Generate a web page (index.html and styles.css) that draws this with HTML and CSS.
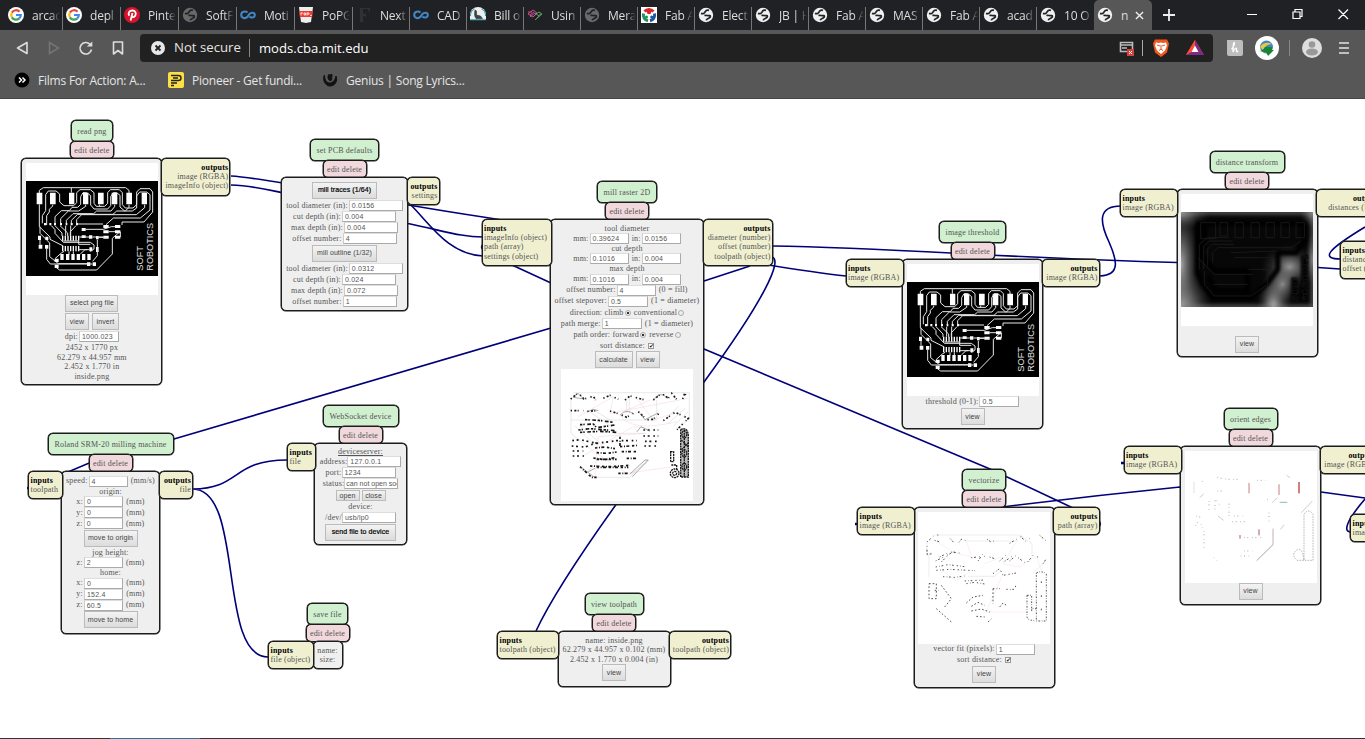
FILE: index.html
```html
<!DOCTYPE html>
<html lang="en">
<head>
<meta charset="utf-8">
<title>mods</title>
<link rel="stylesheet" href="styles.css">
</head>
<body>
<svg class="defs" width="0" height="0" aria-hidden="true">
  <defs>
    <symbol id="globe" viewBox="0 0 16 16"><circle cx="8" cy="8" r="7.2" fill="currentColor"/><path d="M3 6.4c2 .8 3.6-.1 4.2-1.7.7-1.2 2.3-1.8 3.8-1.3M6.4 8.500c2.100-.7 3.100.5 5 .1 1.300-.2 1.200 1.400.3 2.100-1.300 1-3 .8-3.500 2.700" fill="none" stroke="#202124" stroke-width="1.700"/></symbol>
    <symbol id="google" viewBox="0 0 16 16"><circle cx="8" cy="8" r="8" fill="#fff"/><g fill="none" stroke-width="2.200"><path d="M3.900 5.600A4.800 4.800 0 0 1 11.500 4.700" stroke="#ea4335"/><path d="M3.900 10.400a4.800 4.800 0 0 1 0-4.800" stroke="#fbbc05"/><path d="M11.300 11.400a4.800 4.800 0 0 1-7.400-1" stroke="#34a853"/><path d="M8 8h4.800a4.800 4.800 0 0 1-1.500 3.400" stroke="#4285f4"/></g></symbol>
    <symbol id="infinity" viewBox="0 0 16 16"><path d="M7.500 5.500C5.500 3.600 1.200 4.500 1.200 7.800c0 3.500 4.200 4.200 6.300 2l1.800-2.600C11 5 14.800 5.200 14.800 8c0 2.800-3.800 3.200-5.300 1.500" fill="none" stroke="#4186c4" stroke-width="2.100"/></symbol>
    <symbol id="pcb" viewBox="78 213 396 285">
      <rect x="78" y="213" width="396" height="285" fill="#000"/>
      <g fill="#fff"><path d="M110 248h17v35h-17zM150 248h17v35h-17zM207 248h16v35h-16zM249 248h16v35h-16zM294 248h17v35h-17zM335 248h17v35h-17zM379 248h17v35h-17zM425 248h16v35h-16z"/>
      <path d="M310 345h16v9h-16zM310 361h16v9h-16zM310 377h16v9h-16zM345 345h16v9h-16zM345 361h16v9h-16zM345 377h16v9h-16zM245 354h12v9h-12zM245 376h12v8h-12zM267 376h10v10h-10zM288 378h8v10h-8zM114 377h9v13h-9zM136 380h9v10h-9zM116 404h11v12h-11zM135 405h10v11h-10zM268 412h9v12h-9zM288 411h8v15h-8zM181 432h10v18h-10zM198 432h10v18h-10zM214 432h10v18h-10zM230 432h10v18h-10zM246 432h10v18h-10zM262 432h10v18h-10zM164 446h12v10h-12zM164 464h12v10h-12zM261 457h10v11h-10zM278 457h10v11h-10z"/>
      <path d="M186 377h4v15h-4zM194 377h4v15h-4zM202 377h4v15h-4zM210 377h4v15h-4zM218 377h4v15h-4zM226 377h4v15h-4zM234 377h4v15h-4zM186 408h4v16h-4zM194 408h4v16h-4zM202 408h4v16h-4zM210 408h4v16h-4zM218 408h4v16h-4zM226 408h4v16h-4zM234 408h4v16h-4z"/>
      <path d="M132 339h7v7h-7zM148 339h6v7h-6zM162 339h6v7h-6zM180 339h6v7h-6zM197 339h5v7h-5zM212 339h6v7h-6zM228 339h6v7h-6z"/></g>
      <g fill="none" stroke="#e8e8e8" stroke-width="3" stroke-linejoin="round">
        <path d="M118 250V241L130 233H377L387 241V250M118 283V350L150 381V388L190 408M214 234V248"/>
        <path d="M127 340V317L137 302V254L145 243H168L179 252V276L192 287H221L230 278V248L240 239H271L282 248V280L289 289H314L323 280V248L331 239H358L367 248V284L376 294H399L410 284V246L420 236H450L458 246V306L432 336H366V345"/>
        <path d="M158 284V288L148 298V306L140 317V345M165 341V320L184 302H208L216 292H233L242 283V260L249 248H260L272 257V285L282 297H323L332 287V260L340 248H350L360 256V291L374 303H397L410 294V258L419 246H440L450 254V300L421 324H340L318 344"/>
        <path d="M257 284V289L236 303H205L182 326V341M299 284V290M344 284V290L333 303H290L281 311H219L199 331V341M387 284V292L376 303H350L339 313H233L214 331V341M434 284V293L409 314H245L230 329V341"/>
        <path d="M197 347V377M212 347V377M165 347L186 369V378M180 347L203 369V378M228 347L211 365V378M230 342H309M154 347L165 359V370L190 397H271L282 405V417L271 424M257 358H310L334 350H345M238 381H268M277 381H310M326 365H345M361 365V381"/>
        <path d="M120 350V370L149 399V440L175 461H261M120 389V404M140 415V448L151 462H277M165 446L184 429L192 424M169 473L179 480H290L337 432V385L360 365M190 393H236V403H271M292 389V437L278 454M234 419H262M207 424V434M220 424V434M241 432L255 419H268M296 382H325"/>
      </g>
      <g fill="#e0e0e0" font-family="Liberation Sans" font-size="26"><text transform="translate(428 482) rotate(-90)" textLength="74" lengthAdjust="spacingAndGlyphs">SOFT</text><text transform="translate(458 482) rotate(-90)" textLength="143" lengthAdjust="spacingAndGlyphs">ROBOTICS</text></g>
    </symbol>
    <radialGradient id="glow"><stop offset="0" stop-color="#d0d0d0"/><stop offset=".4" stop-color="#888" stop-opacity=".7"/><stop offset="1" stop-color="#333" stop-opacity="0"/></radialGradient>
    <filter id="soft"><feGaussianBlur stdDeviation="7"/></filter>
    <filter id="haze"><feGaussianBlur stdDeviation="4"/></filter>
  </defs>
</svg>

<header class="browser">
  <div class="tabs">
    <div class="tab"><svg><use href="#google"/></svg><span>arcac</span></div>
    <div class="tab"><svg><use href="#google"/></svg><span>depl</span></div>
    <div class="tab"><svg viewBox="0 0 16 16"><circle cx="8" cy="8" r="8" fill="#d8132c"/><path d="M6.600 13.500L8.500 6M5.300 8.800C3.500 5.500 5.700 3.500 8.300 3.500c3.400 0 4.200 3 2.900 5.300-1 1.700-3 1.600-3.500.3" fill="none" stroke="#fff" stroke-width="1.800"/></svg><span>Pinte</span></div>
    <div class="tab dim"><svg><use href="#globe"/></svg><span>SoftF</span></div>
    <div class="tab"><svg><use href="#infinity"/></svg><span>Moti</span></div>
    <div class="tab"><svg viewBox="0 0 16 16"><path d="M1 0h14l-2 15-5 1-5-1z" fill="#eee"/><path d="M1 4h14l-.8 6H1.800z" fill="#ed3b2f"/><path d="M3 5.500v3M3 6h2M6 6v2h1.500V6zM9 5.500v3M9 6h2v1.200H9M12 8.300h2" fill="none" stroke="#fff" stroke-width=".8"/></svg><span>PoPG</span></div>
    <div class="tab small"><svg viewBox="0 0 16 16"><path d="M3 1h11v4h-1l-1-3H7v5h2l1-2v6L9 9H7v5l2 1H3l1-1V2z" fill="#303135"/></svg><span>Next</span></div>
    <div class="tab small"><svg><use href="#infinity"/></svg><span>CAD</span></div>
    <div class="tab small"><svg viewBox="0 0 16 16"><path d="M0 13V8a8 8 0 0 1 16 0v5z" fill="#eee"/><path d="M5 3l1.500 1v4l4 1 2 2.500H6C4 9 4.500 6 5 3zM7 11v2M10 11v2" fill="#444" stroke="#333" stroke-width=".6"/><path d="M0 12.800h16M.5 9a7.500 7.500 0 0 1 4-7M15.500 9a7.500 7.500 0 0 0-4-7" fill="none" stroke="#16a0b0"/></svg><span>Bill o</span></div>
    <div class="tab small"><svg viewBox="0 0 16 16"><g fill="none" stroke-width="1"><path d="M1 7l5-4 4 3-4 4zM3 8l4-3M1 5h4" stroke="#d04c7e"/><path d="M3 10l5-4 4 3-3 3" stroke="#9361bd"/><path d="M8 13l7-6-3-2-4 3M11 9l3-2" stroke="#58a64e"/></g></svg><span>Usin</span></div>
    <div class="tab small dim"><svg><use href="#globe"/></svg><span>Mera</span></div>
    <div class="tab small"><svg viewBox="0 0 16 16"><path d="M0 0h16v16H0z" fill="#fff"/><g fill="none" stroke-width="3"><path d="M3.500 4.500a6 6 0 0 1 9 0" stroke="#d7262e"/><path d="M2.500 6.500a6 6 0 0 0 4.500 7.300" stroke="#22935a"/><path d="M13.500 6.500a6 6 0 0 1-4.500 7.300" stroke="#20579e"/></g><circle cx="8" cy="5" r="2.200" fill="#d7262e"/><circle cx="5.500" cy="10" r="1.500" fill="#22935a"/><circle cx="10.700" cy="10" r="1.500" fill="#20579e"/></svg><span>Fab A</span></div>
    <div class="tab small"><svg><use href="#globe"/></svg><span>Elect</span></div>
    <div class="tab small"><svg><use href="#globe"/></svg><span>JB | H</span></div>
    <div class="tab small"><svg><use href="#globe"/></svg><span>Fab A</span></div>
    <div class="tab small"><svg><use href="#globe"/></svg><span>MAS</span></div>
    <div class="tab small"><svg><use href="#globe"/></svg><span>Fab A</span></div>
    <div class="tab small"><svg><use href="#globe"/></svg><span>acad</span></div>
    <div class="tab small last"><svg><use href="#globe"/></svg><span>10 O</span></div>
    <div class="tab active"><svg><use href="#globe"/></svg><span>n</span><svg class="close" viewBox="0 0 10 10"><path d="M1 1l8 8M9 1L1 9" stroke="#eee" stroke-width="1.500"/></svg></div>
    <svg class="plus" viewBox="0 0 12 12"><path d="M6 0v12M0 6h12" stroke="#eee" stroke-width="1.800"/></svg>
    <svg class="window-buttons" viewBox="0 0 103 10"><path d="M0 5.500h10M46 3h7v6.500h-7zM48 3V.5h7v7h-2M91.500 .5l9.500 9.500M101 .5L91.500 10" fill="none" stroke="#fff" stroke-width="1.200"/></svg>
  </div>
  <div class="toolbar">
    <svg class="nav" viewBox="0 0 112 16"><g fill="none" stroke="#ddd" stroke-width="1.600"><path d="M12 2.500v11L2.500 8z" stroke-linejoin="round"/><path d="M34.500 2.500v11L43.500 8z" stroke="#747474"/><path d="M75 4.200A5.800 5.800 0 1 0 76.500 9.500"/><path d="M98.500 2h9v12L103 10.500 98.500 14z" stroke-linejoin="round"/></g><path d="M71.800 6.500h5.500v-5z" fill="#ddd"/></svg>
    <div class="address">
      <svg class="warn" viewBox="0 0 14 14"><circle cx="7" cy="7" r="7" fill="#e8e8e8"/><path d="M4.500 4.500l5 5M9.500 4.500l-5 5" stroke="#222" stroke-width="1.800"/></svg>
      <span class="insecure">Not secure</span><span class="url">mods.cba.mit.edu</span>
      <svg class="shield-icons" viewBox="0 0 88 20"><path d="M3.500 4.500h12v9h-12zM4 7h11M5 10h5" fill="none" stroke="#bbb" stroke-width="1.600"/><path d="M10 11h7v7h-7z" fill="#d3423b"/><path d="M12 13l3 3M15 13l-3 3" stroke="#fff"/><path d="M25.500 2v16" stroke="#aaa"/><path d="M38 1.500h12l2 4-2 9-6 4.500-6-4.500-2-9z" fill="#f4571c"/><path d="M39 4.500l3 .5 2-.5 2 .5 3-.5 1 3-2 5-4 3.500-4-3.500-2-5z" fill="#fff"/><path d="M40 7l3 1M48 7l-3 1M44 7v4M42 12.500l2-1.500 2 1.500" stroke="#e55326" stroke-width="1" fill="none"/><path d="M78 2L69 17h18z" fill="#f2473b"/><path d="M78 2l9 15H69l9-5z" fill="#7b2c84"/><path d="M78 2v6l-4 6-5 3z" fill="#ff4b36"/><path d="M78 7.500l3.500 6.500h-7z" fill="#fff"/></svg>
    </div>
    <svg class="extensions" viewBox="0 0 130 26"><path d="M3 5h14q2 0 2 2v12q0 2-2 2H5q-2 0-2-2z" fill="#bdbdbd"/><path d="M7.500 14c3-3 3.500-6.500 2.500-6.500s-1 4-1 9.500c1-3 3.500-5 3.500-3v2q0 1.500 1.500 0" fill="none" stroke="#fff" stroke-width="1.300"/><circle cx="43" cy="13" r="12" fill="#fff"/><circle cx="42.500" cy="12" r="6.500" fill="#3d86cd"/><path d="M36 12c3-5 8-5 12-3-4 0-7 2-9 6z" fill="#e8c742"/><path d="M41 12h7v3h2l-6 6-2-4-7-1q4 0 6-4z" fill="#19852f"/><path d="M65.500 5v16" stroke="#888"/><circle cx="88" cy="13" r="10" fill="#dedede"/><circle cx="88" cy="9.500" r="3.300" fill="#999"/><ellipse cx="88" cy="17" rx="6" ry="3.500" fill="#999"/><path d="M115 8h10M115 13h10M115 18h10" stroke="#e4e4e4" stroke-width="1.500"/></svg>
  </div>
  <div class="bookmarks">
    <svg viewBox="0 0 16 16"><circle cx="8" cy="8" r="7.500" fill="#000"/><path d="M5 5.500L7.500 8 5 10.500M8.500 5.500L11 8l-2.500 2.500" fill="none" stroke="#fff" stroke-width="1.500"/></svg><span class="films">Films For Action: A...</span>
    <svg viewBox="0 0 16 16"><rect width="16" height="16" rx="2" fill="#fbdf45"/><path d="M3 3.500h7.500q2.500 0 2.500 2.500t-2.500 2.500H3M5 6h5M3 11h6M3 13.500h3" fill="none" stroke="#222" stroke-width="1.400"/></svg><span class="pioneer">Pioneer - Get fundi...</span>
    <svg viewBox="0 0 16 16"><path d="M2.500 3C0 7 3 14 8 14c5 0 8-5 6-10-1 5-4 7.500-7 7S2.500 7 2.500 3zM6.500 2.500C5.500 5 6 8 8 8.500c2 0 2-1 1.700-2.500L10 2" fill="#111" stroke="#111"/></svg><span class="genius">Genius | Song Lyrics...</span>
  </div>
</header>

<main class="canvas">
  <svg class="wires" viewBox="0 99 1365 640"><g fill="none" stroke="#00007a" stroke-width="1.600">
    <path d="M231 176C270 178 350 197 483 217S760 267 846 276"/>
    <path d="M231 185C265 186 310 200 408 223.500C448 232 462 237 483 237"/>
    <path d="M410 204C431 225 448 254 483 256"/>
    <path d="M484 244q-5 3 0 6M512 265L551 283L704 349L990 469L1073 508M1099 521q3 4-1 6"/>
    <path d="M772 246C900 248 1000 258 1177 262.500L1318 267.500L1340 269"/>
    <path d="M772 257C783 260 764 300 704 382L615 506Q555 590 536 631"/>
    <path d="M750 266L704 281L551 328L174 439L88 463.500L68 472"/>
    <path d="M193 489C240 489 232 460 287 460M193 489C245 490 217 657 268 657"/>
    <path d="M1100 276C1122 275 1116 258 1109 242C1100 223 1097 206 1121 206"/>
    <path d="M1365 227C1327 250 1320 259 1341 259M1002 507Q1090 496 1180 487L1321 492L1365 498M1365 499C1347 520 1343 531 1350 532"/>
    <path d="M27 488h3M855 524h3M1121 463h3" stroke-width="2.500"/>
  </g></svg>

  <section class="module read-png">
    <h2>read png</h2><div class="actions">edit delete</div>
    <div class="body">
      <div class="preview"><svg><use href="#pcb"/></svg></div>
      <div class="buttons"><button class="w53">select png file</button></div>
      <div class="buttons"><button class="w24">view</button><button class="w27">invert</button></div>
      <div class="row">dpi: <b class="field w40">1000.023</b></div>
      <p>2452 x 1770 px</p><p>62.279 x 44.957 mm</p><p>2.452 x 1.770 in</p><p>inside.png</p>
    </div>
    <div class="port out"><strong>outputs</strong><span>image (RGBA)</span><span>imageInfo (object)</span></div>
  </section>

  <section class="module pcb-defaults">
    <h2>set PCB defaults</h2><div class="actions">edit delete</div>
    <div class="body">
      <div class="buttons"><button class="w65 strong">mill traces (1/64)</button></div>
      <div class="row">tool diameter (in): <b class="field w54">0.0156</b></div>
      <div class="row">cut depth (in): <b class="field w54">0.004</b></div>
      <div class="row">max depth (in): <b class="field w54">0.004</b></div>
      <div class="row">offset number: <b class="field w54">4</b></div>
      <div class="buttons second"><button class="w65">mill outline (1/32)</button></div>
      <div class="row">tool diameter (in): <b class="field w54">0.0312</b></div>
      <div class="row">cut depth (in): <b class="field w54">0.024</b></div>
      <div class="row">max depth (in): <b class="field w54">0.072</b></div>
      <div class="row">offset number: <b class="field w54">1</b></div>
    </div>
    <div class="port out"><strong>outputs</strong><span>settings</span></div>
  </section>

  <section class="module mill-raster">
    <h2>mill raster 2D</h2><div class="actions">edit delete</div>
    <div class="body">
      <p>tool diameter</p><div class="row">mm: <b class="field w39">0.39624</b> &nbsp;in: <b class="field w39">0.0156</b></div>
      <p>cut depth</p><div class="row">mm: <b class="field w39">0.1016</b> &nbsp;in: <b class="field w39">0.004</b></div>
      <p>max depth</p><div class="row">mm: <b class="field w39">0.1016</b> &nbsp;in: <b class="field w39">0.004</b></div>
      <div class="row">offset number: <b class="field w39">4</b> &nbsp;(0 = fill)</div>
      <div class="row">offset stepover: <b class="field w40">0.5</b> &nbsp;(1 = diameter)</div>
      <div class="row choice">direction: climb <i class="radio on"></i> &nbsp;conventional <i class="radio"></i></div>
      <div class="row">path merge: <b class="field w40">1</b> &nbsp;(1 = diameter)</div>
      <div class="row choice">path order: forward <i class="radio on"></i> &nbsp;reverse <i class="radio"></i></div>
      <div class="row sort">sort distance: <i class="check">✔</i></div>
      <div class="buttons"><button class="w37">calculate</button><button class="w24">view</button></div>
      <div class="preview"><svg viewBox="93 57 396 396">
        <g fill="none" stroke="#dedede" stroke-width="2"><path d="M130 128H478V205L440 240M123 148V250L185 300M123 210H380M135 228L200 290M147 225L215 283M178 185L245 230M190 180L250 215M290 145V190M298 142V190M380 150V205M410 205L445 170M415 220L465 175M430 228L475 185M260 250H345M190 382H300L350 330M303 372L350 338M165 370L195 345"/></g>
        <g fill="none" stroke="#f5c4c9" stroke-width="1.200"><path d="M145 200L250 140L240 190L475 145M265 190Q300 250 440 215M155 320L310 230L360 235M185 300L290 370L430 350M195 380L205 260L350 250M320 145L370 210L430 190M280 185L360 150"/></g>
        <g fill="none" stroke="#171717" stroke-width="5" stroke-dasharray="4 7 6 4 3 13"><path d="M122 147L145 129L162 147L190 139L197 150M220 145L240 136L265 148M285 150L300 138L345 150M370 150L395 130L415 145L425 130L440 148M458 147L464 130L475 145"/><path d="M122 182H160M172 184L200 182M240 183L270 193L290 202L310 190M325 185L350 209L370 208L390 186M400 212L435 187L475 205L440 240" /><path d="M165 209L205 211L250 217M150 224L190 222L200 233L254 225M145 240L180 236L258 242M150 247L210 244L260 247" stroke-dasharray="7 3 4 8 11 5"/><path d="M127 272L150 269L200 280L260 272H320M125 288L165 291L200 278M128 303H160M128 318H162M340 240H385M340 258H385M345 274H385M343 288H385" stroke-dasharray="5 8 6 11"/><path d="M195 294L225 291L255 296M200 308L232 310L260 306M190 324L225 329L260 322M200 328H260M180 348L240 350L300 346M200 352H295M270 260V290M270 290L325 286M275 305H320M290 325H318M265 370H300M150 350L185 382H200" stroke-dasharray="7 5 3 4 9 8"/></g>
        <path d="M452 238Q475 230 475 260V381H452Z" fill="#bbb"/>
        <g fill="none" stroke="#191919" stroke-width="4" stroke-dasharray="6 2"><path d="M452 238Q475 230 475 260V381H452Z"/><ellipse cx="463" cy="253" rx="7" ry="11"/><ellipse cx="463" cy="310" rx="7" ry="11"/><ellipse cx="463" cy="350" rx="7" ry="10"/><path d="M454 270L475 290M454 299L475 280M463 240V380M422 305h9v30h-9z"/><circle cx="434" cy="370" r="13"/><circle cx="434" cy="370" r="6"/><path d="M424 345h16v14"/></g>
        <g fill="none" stroke="#555" stroke-width="1.500"><path d="M130 142l13-13 18 18zM172 186l17-8 16 4M270 195q20-20 40-3M330 190l15 19 35-18M370 150q20-30 43-5M307 380l48-50-10 0-46 43M150 349l45 34M175 365l20-10M320 246l13-16 27 14"/></g>
      </svg></div>
    </div>
    <div class="port in"><strong>inputs</strong><span>imageInfo (object)</span><span>path (array)</span><span>settings (object)</span></div>
    <div class="port out"><strong>outputs</strong><span>diameter (number)</span><span>offset (number)</span><span>toolpath (object)</span></div>
  </section>

  <section class="module threshold">
    <h2>image threshold</h2><div class="actions">edit delete</div>
    <div class="body"><div class="preview"><svg><use href="#pcb"/></svg></div><div class="row">threshold (0-1): <b class="field w40">0.5</b></div><div class="buttons"><button class="w24">view</button></div></div>
    <div class="port in"><strong>inputs</strong><span>image (RGBA)</span></div><div class="port out"><strong>outputs</strong><span>image (RGBA)</span></div>
  </section>

  <section class="module distance">
    <h2>distance transform</h2><div class="actions">edit delete</div>
    <div class="body"><div class="preview"><svg viewBox="230 213 396 285"><path d="M230 213h396v285H230z" fill="#070707"/>
      <g fill="url(#glow)"><ellipse cx="230" cy="498" rx="95" ry="120"/><ellipse cx="230" cy="370" rx="60" ry="190" opacity=".8"/><ellipse cx="508" cy="505" rx="52" ry="120"/><ellipse cx="555" cy="378" rx="85" ry="68" opacity=".75"/><ellipse cx="535" cy="430" rx="60" ry="70" opacity=".6"/><ellipse cx="230" cy="213" rx="90" ry="55" opacity=".8"/><ellipse cx="626" cy="213" rx="40" ry="50" opacity=".8"/><ellipse cx="626" cy="355" rx="25" ry="80" opacity=".7"/></g>
      <path d="M230 214H626V498H230" fill="none" stroke="#777" stroke-width="9" filter="url(#soft)"/>
      <g fill="none" stroke="#000" stroke-width="16" filter="url(#haze)"><path d="M275 248H540L600 250V300L575 335H520V385L490 425L440 470H325L295 430L280 395V250M300 250V300L290 340L330 390H430V450H335L310 405"/><path d="M571 480V410M600 480V342" stroke-width="20"/></g>
      <g fill="none" stroke="#1c1c1c" stroke-width="2.500"><path d="M289 245h45v48h-45zM347 245h23v40h-23zM392 245h25v45h-25zM440 245h25v45h-25zM485 245h25v45h-25zM530 245h25v45h-25zM575 245h25v45h-25zM285 385V310L310 290H375M298 385V315L315 300H385M310 375V323L325 310H390M325 365V335L340 320H560L590 300M280 350L330 400H445M380 335L520 330M300 390V430L330 465H440L490 430V385M325 430H430M390 350H500V385H430"/></g>
      <g fill="#000" stroke="#262626" stroke-width="1" font-family="Liberation Sans" font-weight="bold" font-size="26"><text transform="translate(581 482) rotate(-90)" textLength="74" lengthAdjust="spacingAndGlyphs">SOFT</text><text transform="translate(611 482) rotate(-90)" textLength="143" lengthAdjust="spacingAndGlyphs">ROBOTICS</text></g>
    </svg></div><div class="buttons lower"><button class="w24">view</button></div></div>
    <div class="port in"><strong>inputs</strong><span>image (RGBA)</span></div><div class="port out wide"><strong>outputs</strong><span>distances (F32)</span></div>
  </section>

  <section class="module offset"><div class="port in"><strong>inputs</strong><span>distances (F32)</span><span>offset (number)</span></div></section>
  <section class="module edges"><div class="port in"><strong>inputs</strong><span>image (RGBA)</span></div></section>

  <section class="module roland">
    <h2>Roland SRM-20 milling machine</h2><div class="actions">edit delete</div>
    <div class="body">
      <div class="row">speed: <b class="field w39">4</b> &nbsp;(mm/s)</div><p>origin:</p>
      <div class="row">x: <b class="field w39">0</b> &nbsp;(mm)</div><div class="row">y: <b class="field w39">0</b> &nbsp;(mm)</div><div class="row">z: <b class="field w39">0</b> &nbsp;(mm)</div>
      <div class="buttons"><button class="w54">move to origin</button></div><p>jog height:</p>
      <div class="row">z: <b class="field w39">2</b> &nbsp;(mm)</div><p>home:</p>
      <div class="row">x: <b class="field w39">0</b> &nbsp;(mm)</div><div class="row">y: <b class="field w39">152.4</b> &nbsp;(mm)</div><div class="row">z: <b class="field w39">60.5</b> &nbsp;(mm)</div>
      <div class="buttons"><button class="w54">move to home</button></div>
    </div>
    <div class="port in"><strong>inputs</strong><span>toolpath</span></div><div class="port out"><strong>outputs</strong><span>file</span></div>
  </section>

  <section class="module websocket">
    <h2>WebSocket device</h2><div class="actions">edit delete</div>
    <div class="body">
      <p><u>deviceserver:</u></p><div class="row">address: <b class="field w54">127.0.0.1</b></div><div class="row">port: <b class="field w54">1234</b></div><div class="row">status: <b class="field w54 status">can not open soc</b></div>
      <div class="buttons flat"><button class="w24">open</button><button class="w24">close</button></div><p>device:</p>
      <div class="row path">/dev/<b class="field w54">usb/lp0</b></div><div class="buttons"><button class="w71 strong">send file to device</button></div>
    </div>
    <div class="port in"><strong>inputs</strong><span>file</span></div>
  </section>

  <section class="module save">
    <h2>save file</h2><div class="actions">edit delete</div>
    <div class="body"><p>name:</p><p>size:</p></div>
    <div class="port in"><strong>inputs</strong><span>file (object)</span></div>
  </section>

  <section class="module toolpath">
    <h2>view toolpath</h2><div class="actions">edit delete</div>
    <div class="body"><p>name: inside.png</p><p>62.279 x 44.957 x 0.102 (mm)</p><p>2.452 x 1.770 x 0.004 (in)</p><div class="buttons"><button class="w24">view</button></div></div>
    <div class="port in"><strong>inputs</strong><span>toolpath (object)</span></div><div class="port out"><strong>outputs</strong><span>toolpath (object)</span></div>
  </section>

  <section class="module vectorize">
    <h2>vectorize</h2><div class="actions">edit delete</div>
    <div class="body"><div class="preview"><svg viewBox="235 155 396 396">
      <g fill="none" stroke="#e4e4e4" stroke-width="2"><path d="M285 224H540L577 250V288M262 240V282M268 282V350M380 242H535M385 348H465L480 335M580 338L620 300"/></g>
      <g fill="none" stroke="#f8dfe1" stroke-width="1.500"><path d="M285 240L340 275L395 290L380 240M530 243L490 310L540 320L590 288L605 330M300 325L350 362L390 335M490 340L440 455H560M485 290L435 310"/></g>
      <g fill="none" stroke="#333" stroke-width="2.500" stroke-dasharray="3 5 6 9 2 13"><path d="M262 282V245L285 224H300M285 240L305 246M332 235L342 246M358 246L366 236L385 244M442 236L455 246L470 238M510 249L545 228L555 244L570 234M600 225L620 242M262 282L280 280M300 290L330 275L360 278M288 302L345 273M305 305L325 285M395 292L435 288M415 302L430 280M450 290L465 295M480 302L500 283M495 303L525 283M510 302L535 280M535 292L560 310L580 285L600 292M610 310L620 295"/><path d="M288 320L325 313L375 319M290 330L330 327L405 331M310 349L345 351L375 347M375 362L435 359M380 370L405 366L435 371M460 340L480 325L490 345L530 338M460 385H480M500 387H525L530 370" stroke-dasharray="4 7 2 5 5 9"/><path d="M268 370h22v45h-22zM305 375L335 415L315 440M290 445L335 485M285 390h12M380 428L400 410L430 405M460 385V430M395 438L415 426L435 435M395 452L425 446L450 455M410 468L435 470M445 485L455 476M480 440L490 428L500 435" stroke-dasharray="5 6"/></g>
      <g fill="none" stroke="#333" stroke-width="2.500" stroke-dasharray="5 4 2 5"><path d="M590 338Q605 330 620 340V482H590zM562 405h14v40h14M562 405V470Q565 482 590 480"/><path d="M605 363v5M605 405v5M605 445v7M576 447v7"/></g>
    </svg></div><div class="row">vector fit (pixels): <b class="field w39">1</b></div><div class="row">sort distance: <i class="check">✔</i></div><div class="buttons"><button class="w24">view</button></div></div>
    <div class="port in"><strong>inputs</strong><span>image (RGBA)</span></div><div class="port out"><strong>outputs</strong><span>path (array)</span></div>
  </section>

  <section class="module orient">
    <h2>orient edges</h2><div class="actions">edit delete</div>
    <div class="body"><div class="preview"><svg viewBox="253 150 396 396">
      <g fill="none" stroke="#999" stroke-width="1.500"><path d="M280 243V276" stroke="#cbbcbc"/><path d="M297 290L309 279M352 345L369 358M515 305L529 290M602 335L635 300M558 223l10 7M540 385L550 371"/><path d="M468 479L517 431" stroke="#777" stroke-width="2"/><path d="M517 431V383" stroke="#b08787" stroke-width="2"/></g>
      <g fill="none" stroke="#777" stroke-width="2" stroke-dasharray="2 8 3 11"><path d="M350 230L380 235H415M470 238H495M305 240v2M350 270H370M325 300V330M343 325V295L360 315M385 345V300M286 345L305 350M285 375Q295 350 305 380M310 390v50M395 362H437M400 345H425M505 335V365M430 410H480M430 450H455M420 465H450M500 295h8M340 470L348 478"/></g>
      <path d="M445 246V277M535 250V282" stroke="#a94141" stroke-width="2"/><path d="M595 243V277" stroke="#a00000" stroke-width="3"/><path d="M475 385V403M418 402V413" stroke="#711" stroke-width="2"/><path d="M537 304H560" stroke="#52a567" stroke-width="2"/>
      <path d="M610 340Q623 320 637 340V478H590Q570 463 587 448Q605 435 610 478V340" fill="none" stroke="#999" stroke-width="2" stroke-dasharray="5 3"/>
    </svg></div><div class="buttons"><button class="w24">view</button></div></div>
    <div class="port in"><strong>inputs</strong><span>image (RGBA)</span></div><div class="port out"><strong>outputs</strong><span>image (RGBA)</span></div>
  </section>
  <div class="desktop-edge"></div>
</main>
</body>
</html>
```

FILE: styles.css
```css
* { box-sizing: border-box; }
body { margin: 0; width: 1365px; height: 739px; overflow: hidden; background: #fff; }
.defs { position: absolute; }
svg { display: block; flex: none; letter-spacing: 0; }

.browser { height: 99px; background: #575757; border-bottom: 1px solid #464646; color: #e5e5e5; font: 12px "Open Sans", "Noto Sans", sans-serif; }
.tabs { display: flex; height: 30px; padding-left: 5px; background: #202124; }
.tab { display: flex; flex: none; align-items: center; width: 58px; height: 30px; padding-left: 3px; background: linear-gradient(#777, #777) right bottom / 1px 23px no-repeat; color: #f0f0f0; }
.tab.small { width: 57px; }
.tab.last { background: none; }
.tab svg { width: 16px; height: 16px; }
.tab span { width: 29px; margin-left: 8px; white-space: nowrap; letter-spacing: -.2px; color: #ddd; -webkit-mask-image: linear-gradient(90deg, #000 62%, transparent 96%); mask-image: linear-gradient(90deg, #000 62%, transparent 96%); }
.tab.dim svg { color: #696969; }
.tab.active { background: #575757; border-radius: 5px 5px 0 0; }
.tab.active span { width: 9px; -webkit-mask-image: none; mask-image: none; }
.tab.active .close { width: 9px; height: 9px; margin-left: 5px; }
.plus { width: 12px; height: 12px; margin: 9px 0 0 11px; }
.window-buttons { width: 103px; height: 10px; margin: 9px 0 0 72px; overflow: visible; }
.toolbar { display: flex; height: 36px; padding: 4px 0; }
.nav { width: 112px; height: 16px; margin: 6px 13px 0 15px; }
.address { display: flex; align-items: center; width: 1073px; height: 28px; padding-left: 11px; background: #212121; border-radius: 4px; }
.warn { width: 14px; height: 14px; margin-right: 9px; }
.insecure { width: 76px; height: 18px; line-height: 17px; border-right: 1px solid #888; font-size: 13.200px; white-space: nowrap; }
.url { width: 110px; margin-left: 9px; color: #fff; font-size: 13.100px; white-space: nowrap; }
.shield-icons { width: 88px; height: 20px; margin-left: 748px; }
.extensions { width: 130px; height: 26px; margin: 1px 0 0 11px; }
.bookmarks { display: flex; align-items: center; height: 28px; padding-left: 14px; }
.bookmarks svg { width: 16px; height: 16px; margin-right: 8px; }
.bookmarks span { white-space: nowrap; letter-spacing: -.22px; }
.films { width: 130px; }
.pioneer { width: 130px; }

.canvas { position: relative; height: 640px; overflow: hidden; font: 8px/9.400px "Liberation Serif", serif; letter-spacing: .18px; color: #555; }
.wires { position: absolute; inset: 0; width: 1365px; height: 640px; }
.module { position: absolute; display: flex; flex-direction: column; align-items: center; }
.module h2, .actions, .body, .port { border: 1px solid #1c1c1c; border-radius: 5px; box-shadow: 0 0 0 .5px #1c1c1c; }
.module h2 { flex: none; height: 21.500px; margin: 0; background: #d0f0d0; font: inherit; line-height: 21px; text-align: center; white-space: nowrap; }
.actions { flex: none; width: 44px; height: 18px; margin-top: -1px; background: #f0d8dc; line-height: 17px; text-align: center; white-space: nowrap; }
.body { width: 100%; margin-top: -1px; flex: 1; padding-top: 4px; background: #efefef; }
.body p { height: 9.400px; margin: 0; text-align: center; white-space: nowrap; }
.row { display: flex; align-items: center; justify-content: center; gap: 1px; height: 11px; white-space: nowrap; }
.field { height: 11px; padding-left: 2px; overflow: hidden; border: 1px solid #aaa; border-top-color: #ddd; border-left-color: #ccc; background: #fff; font: 7px/9px "Liberation Sans", sans-serif; letter-spacing: .2px; color: #555; }
.field.status { letter-spacing: 0; padding-left: 1px; }
.buttons { display: flex; justify-content: center; gap: 3px; padding: .3px 0 1.200px; }
button { flex: none; height: 17px; padding: 0; border: 1px solid #bbb; background: linear-gradient(#f3f3f3, #dcdcdc); font: 7px/14px "Liberation Sans", sans-serif; letter-spacing: .08px; color: #444; white-space: nowrap; }
.strong { color: #000; -webkit-text-stroke: .2px #000; }
.w24 { width: 24px; } .w27 { width: 27px; } .w37 { width: 38px; } .w39 { width: 39px; } .w40 { width: 40px; } .w53 { width: 53px; } .w54 { width: 54px; } .w65 { width: 65px; } .w71 { width: 71px; }
.preview { display: flex; align-items: center; width: 132px; height: 132px; margin: 0 auto; background: #fff; }
.preview svg { width: 132px; height: 95px; }
.port { position: absolute; top: 37.500px; display: flex; flex-direction: column; padding: 4px 1px; background: #f0f0d0; white-space: nowrap; }
.port strong { color: #000; }
.in { right: calc(100% - 1.500px); padding-left: 1.500px; }
.out { left: calc(100% - 1.500px); align-items: flex-end; }
.radio { width: 6px; height: 6px; border: 1px solid #aaa; border-radius: 50%; background: #eee; }
.on { background: radial-gradient(#333 40%, #eee 50%); }
.check { width: 6px; height: 6px; margin-left: 2px; border: 1px solid #999; background: #fff; font: 6px/4px "DejaVu Sans", sans-serif; color: #222; }

.read-png { left: 21.400px; top: 21px; width: 141px; height: 265px; }
.read-png h2 { width: 42px; }
.read-png .out { width: 69.500px; }
.read-png .row { margin-bottom: 1px; }
.pcb-defaults { left: 281px; top: 40px; width: 127px; height: 172px; }
.pcb-defaults h2 { width: 69px; }
.pcb-defaults .out { width: 33px; }
.pcb-defaults .second { padding-top: 1px; }
.mill-raster { left: 550px; top: 82px; width: 154px; height: 324px; }
.mill-raster h2 { width: 60px; }
.mill-raster .in, .mill-raster .out { width: 70px; }
.mill-raster .choice { padding-top: 1px; margin-bottom: .3px; }
.mill-raster .sort { height: 10.500px; }
.mill-raster .preview svg { height: 132px; }
.threshold { left: 902px; top: 122px; width: 141px; height: 208px; }
.threshold h2 { width: 67px; }
.threshold .port { width: 58px; }
.threshold .preview { margin-bottom: .5px; }
.threshold .row { margin-bottom: 1px; }
.distance { left: 1176.500px; top: 52px; width: 141px; height: 206px; }
.distance h2 { width: 75px; }
.distance .in { width: 58px; }
.distance .wide { width: 66px; }
.distance .lower { margin-top: 10px; }
.offset { left: 1340px; top: 104px; width: 10px; }
.offset .in { right: auto; left: 0; width: 60px; }
.edges { left: 1350px; top: 377px; width: 10px; }
.edges .in { right: auto; left: 0; width: 60px; }
.roland { left: 61px; top: 334px; width: 99px; height: 201px; }
.roland h2 { width: 126px; }
.roland .port { width: 34.500px; }
.roland .buttons { padding: .8px 0 1.200px; }
.websocket { left: 314px; top: 306px; width: 93px; height: 140px; }
.websocket h2 { width: 76px; }
.websocket .port { width: 28.500px; }
.websocket .row { gap: 0; }
.websocket .flat { gap: 2px; }
.websocket .flat button { height: 11px; line-height: 8px; }
.websocket .buttons { padding-top: .8px; }
.websocket .body { padding-top: 3.500px; }
.save { left: 312.500px; top: 504px; width: 30px; height: 66px; }
.save h2 { width: 41px; }
.save .port { width: 46px; }
.toolpath { left: 557.500px; top: 494px; width: 113px; height: 94px; }
.toolpath h2 { width: 59px; }
.toolpath .port { width: 62px; }
.toolpath .body { padding-top: 4.500px; }
.vectorize { left: 913.500px; top: 370px; width: 141px; height: 219px; }
.vectorize h2 { width: 44px; }
.vectorize .in { width: 58px; }
.vectorize .out { width: 46.500px; }
.vectorize .preview svg { height: 132px; }
.orient { left: 1180px; top: 309px; width: 141px; height: 197px; }
.orient h2 { width: 54px; }
.orient .port { width: 58px; }
.orient .preview svg { height: 132px; }
.desktop-edge { position: absolute; inset: auto 0 0; height: 1px; background: linear-gradient(90deg, #333 110px, #2474a8 110px 200px, #333 200px); }
```
